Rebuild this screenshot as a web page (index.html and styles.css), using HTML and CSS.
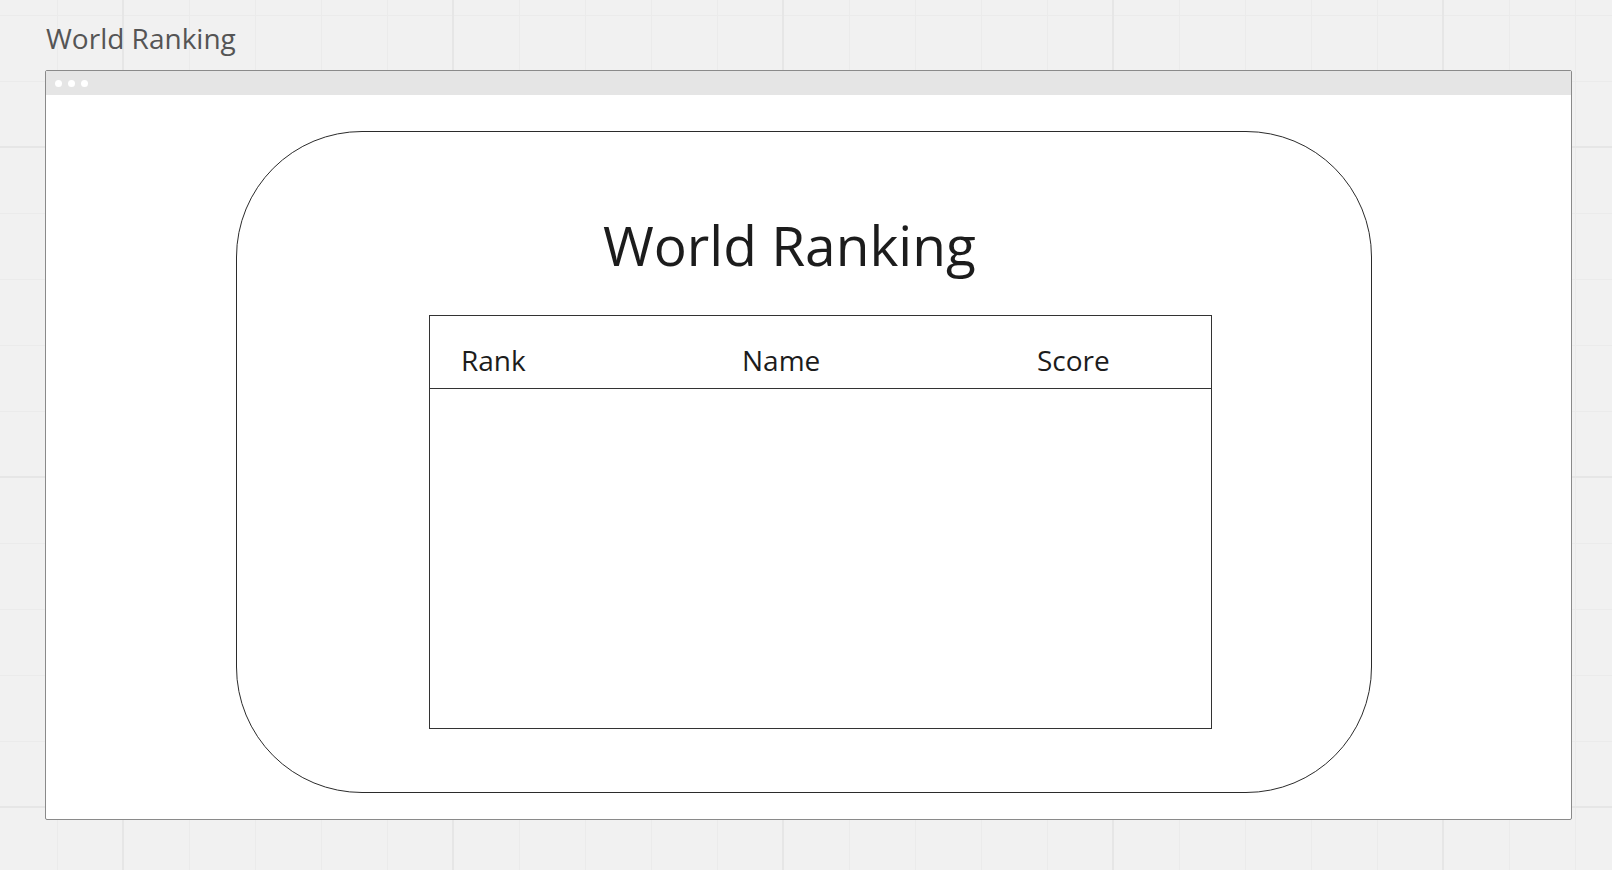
FILE: index.html
```html
<!DOCTYPE html>
<html lang="en">
<head>
<meta charset="utf-8">
<title>World Ranking</title>
<link rel="stylesheet" href="styles.css">
</head>
<body>
<div class="canvas">
  <div class="frame-label">World Ranking</div>
  <div class="window">
    <div class="titlebar">
      <span class="dot"></span><span class="dot"></span><span class="dot"></span>
    </div>
    <div class="window-body">
      <div class="card">
        <h1 class="title">World Ranking</h1>
        <div class="table">
          <div class="table-head">
            <span class="col col-rank">Rank</span>
            <span class="col col-name">Name</span>
            <span class="col col-score">Score</span>
          </div>
          <div class="table-body"></div>
        </div>
      </div>
    </div>
  </div>
</div>
</body>
</html>
```

FILE: styles.css
```css
html, body {
  margin: 0;
  padding: 0;
}

body {
  width: 1612px;
  height: 870px;
  overflow: hidden;
  font-family: "Open Sans", "Noto Sans", sans-serif;
  background-color: #f1f1f1;
  background-image:
    linear-gradient(to right, #e6e6e6 2px, transparent 2px),
    linear-gradient(to bottom, #e6e6e6 2px, transparent 2px),
    linear-gradient(to right, #ebebeb 1px, transparent 1px),
    linear-gradient(to bottom, #ebebeb 1px, transparent 1px);
  background-size: 330px 330px, 330px 330px, 66px 66px, 66px 66px;
  background-position: 122px 0, 0 146px, 57px 0, 0 15px;
}

.canvas {
  padding: 19px 0 0 45px;
}

.frame-label {
  font-size: 28px;
  line-height: 38px;
  color: #555555;
  margin-bottom: 13px;
  padding-left: 1px;
}

.window {
  width: 1525px;
  height: 748px;
  border: 1px solid #8a8a8a;
  border-radius: 2px;
  background: #ffffff;
  display: flex;
  flex-direction: column;
}

.titlebar {
  height: 24px;
  background: #e5e5e5;
  display: flex;
  align-items: center;
  gap: 6px;
  padding-left: 9px;
}

.dot {
  width: 7px;
  height: 7px;
  border-radius: 50%;
  background: #ffffff;
}

.window-body {
  flex: 1;
  padding: 36px 0 0 190px;
}

.card {
  width: 1134px;
  height: 660px;
  border: 1px solid #2b2b2b;
  border-radius: 126px;
  box-sizing: content-box;
}

.title {
  margin: 75px 0 0 0;
  padding-left: 366px;
  font-size: 55px;
  font-weight: 400;
  line-height: 76px;
  color: #1c1c1c;
}

.table {
  margin: 32px 0 0 192px;
  width: 781px;
  height: 412px;
  border: 1px solid #333333;
  display: flex;
  flex-direction: column;
}

.table-head {
  display: grid;
  grid-template-columns: 281px 295px 1fr;
  padding: 25px 0 9px 31px;
  border-bottom: 1px solid #333333;
  font-size: 28px;
  line-height: 38px;
  color: #1c1c1c;
}

.table-body {
  flex: 1;
}
```
